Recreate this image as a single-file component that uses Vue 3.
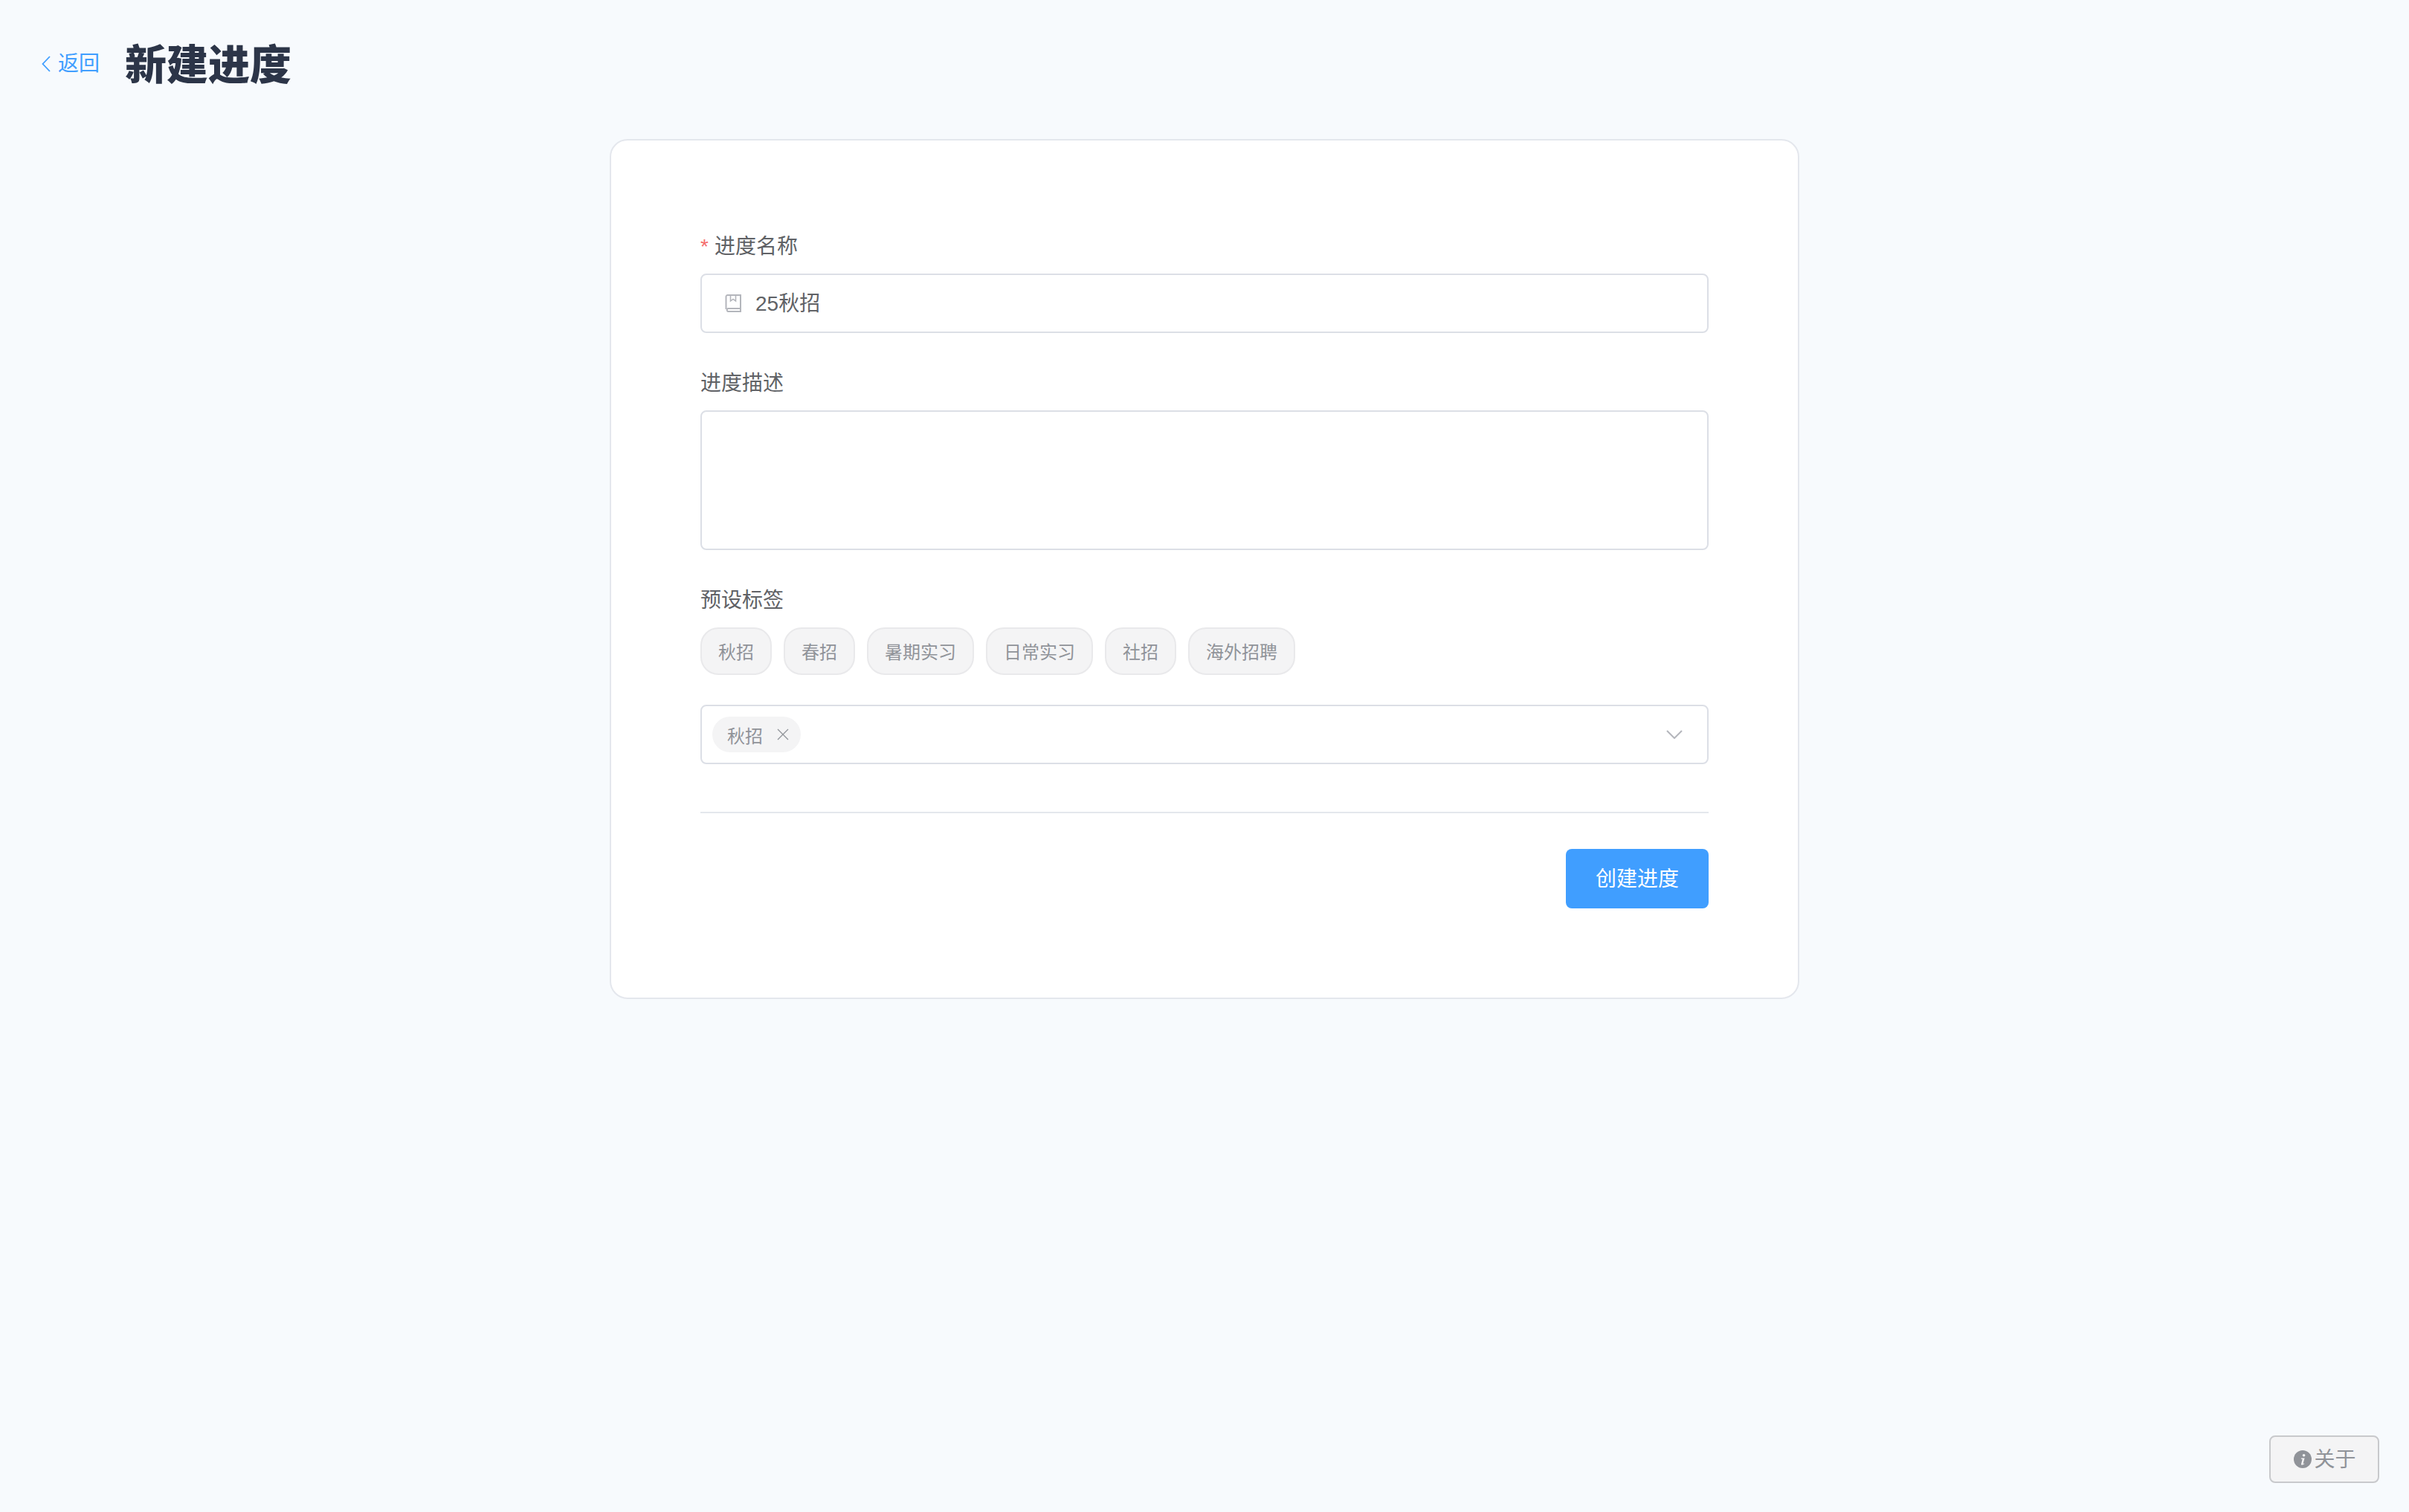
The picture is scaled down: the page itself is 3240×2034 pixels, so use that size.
<script setup>
const presets = ['秋招', '春招', '暑期实习', '日常实习', '社招', '海外招聘']
</script>

<template>
  <div class="page">
    <header class="head">
      <a class="back">
        <svg class="back-icon" viewBox="0 0 12 22" fill="none" stroke="currentColor" stroke-width="1.8"><path d="M11 1 1.5 11 11 21" /></svg>
        <span>返回</span>
      </a>
      <h1 class="title">新建进度</h1>
    </header>

    <main class="card">
      <div class="field">
        <label class="label"><span class="star">*</span>进度名称</label>
        <div class="box input">
          <svg class="book" viewBox="0 0 22 24" fill="none" stroke="#b4b6bc" stroke-width="2">
            <path d="M1.5 20V3a2 2 0 0 1 2-2H21v18H4a2.2 2.2 0 0 0 0 4h17v-4" />
            <path d="M7.5 1v8l3.5-2.6L14.500 9V1" stroke-width="1.6" />
          </svg>
          <span class="value">25秋招</span>
        </div>
      </div>

      <div class="field">
        <label class="label">进度描述</label>
        <div class="box area"></div>
      </div>

      <div class="field">
        <label class="label">预设标签</label>
        <div class="tags">
          <span v-for="t in presets" :key="t" class="tag">{{ t }}</span>
        </div>
      </div>

      <div class="box select">
        <span class="chosen">
          秋招
          <svg class="close" viewBox="0 0 16 16" fill="none" stroke="#909399" stroke-width="1.3"><path d="M1 1 15 15M15 1 1 15" /></svg>
        </span>
        <svg class="arrow" viewBox="0 0 22 12" fill="none" stroke="#b4b6bc" stroke-width="2"><path d="M1 1 11 11 21 1" /></svg>
      </div>

      <div class="rule"></div>

      <div class="actions">
        <button class="primary">创建进度</button>
      </div>
    </main>

    <button class="about">
      <svg class="info" viewBox="0 0 24 24"><circle cx="12" cy="12" r="12" fill="#909399" /><circle cx="13.6" cy="6.8" r="1.8" fill="#f4f4f5" /><path d="M10 10.500h4.600l-2.100 7.400c-.1.500.4.600 1.600-.3l.3.500c-1.700 1.700-4.600 2.500-4.400.4l1.600-6.600-1.800-.4z" fill="#f4f4f5" /></svg>
      <span class="about-text">关于</span>
    </button>
  </div>
</template>

<style>
html, body { margin: 0; background: #f7fafd; }
</style>

<style scoped>
.page {
  position: relative;
  height: 2034px;
  box-sizing: border-box;
  background: #f7fafd;
  font-family: "Liberation Sans", "Noto Sans CJK SC", sans-serif;
  overflow: hidden;
}
.head {
  display: flex;
  align-items: center;
  height: 187px;
  box-sizing: border-box;
  padding: 0 0 13px 56px;
}
.back {
  display: flex;
  align-items: center;
  gap: 10px;
  color: #409eff;
  font-size: 28px;
  line-height: 40px;
  margin-right: 34px;
  margin-bottom: 2px;
}
.back-icon { width: 12px; height: 22px; }
.title {
  margin: 2px 0 0;
  font-size: 56px;
  font-weight: 900;
  line-height: 80px;
  color: #2c3548;
}
.card {
  box-sizing: border-box;
  width: 1600px;
  height: 1157px;
  margin: 0 auto;
  padding: 119px 120px 0;
  background: #fff;
  border: 2px solid #e4e7ed;
  border-radius: 24px;
}
.field { margin-bottom: 44px; }
.field:nth-child(3) { margin-bottom: 40px; }
.label {
  display: block;
  height: 44px;
  line-height: 48px;
  margin-bottom: 16px;
  font-size: 28px;
  color: #606266;
}
.star {
  color: #f56c6c;
  margin-right: 8px;
}
.box {
  box-sizing: border-box;
  background: #fff;
  border: 2px solid #dcdfe6;
  border-radius: 8px;
}
.input {
  display: flex;
  align-items: center;
  height: 80px;
  padding-left: 31px;
}
.book { width: 22px; height: 24px; flex: none; }
.value {
  margin-left: 19px;
  padding-bottom: 4px;
  font-size: 28px;
  color: #606266;
}
.area { height: 188px; }
.tags { display: flex; gap: 16px; }
.tag {
  box-sizing: border-box;
  height: 64px;
  line-height: 64px;
  padding: 0 22px;
  font-size: 24px;
  color: #909399;
  background: #f4f4f5;
  border: 2px solid #e9e9eb;
  border-radius: 24px;
}
.select {
  display: flex;
  align-items: center;
  justify-content: space-between;
  height: 80px;
  padding: 0 33px 0 14px;
}
.chosen {
  display: flex;
  align-items: center;
  height: 48px;
  padding: 0 16px 0 20px;
  font-size: 24px;
  color: #909399;
  background: #f4f4f5;
  border-radius: 24px;
}
.close { width: 16px; height: 16px; margin-left: 19px; }
.arrow { width: 22px; height: 12px; }
.rule {
  height: 2px;
  margin-top: 64px;
  background: #e4e7ed;
}
.actions {
  display: flex;
  justify-content: flex-end;
  margin-top: 48px;
}
.primary {
  width: 192px;
  height: 80px;
  padding: 0 0 4px;
  border: 0;
  border-radius: 8px;
  background: #409eff;
  color: #fff;
  font: inherit;
  font-size: 28px;
}
.about {
  position: absolute;
  right: 40px;
  bottom: 39px;
  display: flex;
  align-items: center;
  justify-content: center;
  gap: 3px;
  box-sizing: border-box;
  width: 148px;
  height: 64px;
  padding: 0 0 0 2px;
  border: 2px solid #c8c9cc;
  border-radius: 8px;
  background: #f4f4f5;
  color: #909399;
  font: inherit;
  font-size: 28px;
}
.about-text { padding-bottom: 4px; }
.info { width: 24px; height: 24px; }
</style>
